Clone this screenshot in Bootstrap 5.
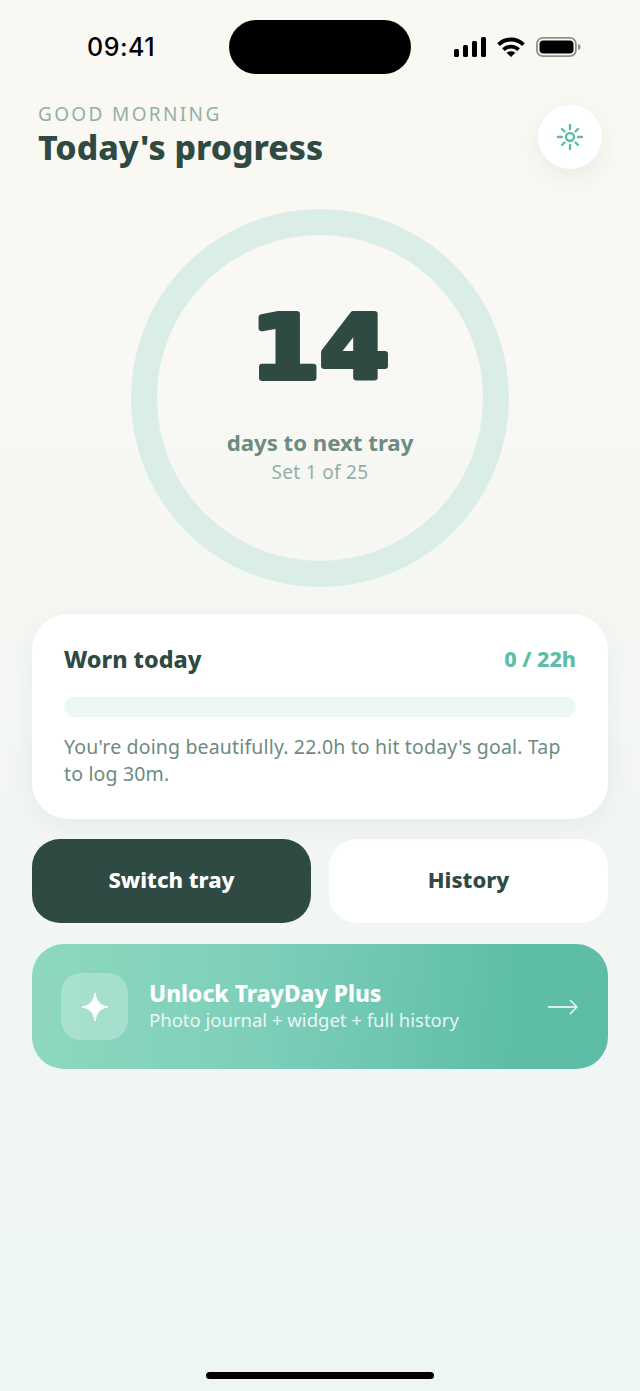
<!DOCTYPE html>
<html lang="en">
<head>
<meta charset="utf-8">
<title>TrayDay</title>
<link rel="stylesheet" href="https://cdn.jsdelivr.net/npm/bootstrap@5.3.0/dist/css/bootstrap.min.css">
<style>
html,body{height:100%}
body{font-family:"Noto Sans","Lato",sans-serif;background:linear-gradient(180deg,#faf8f3 0%,#f9f8f4 20%,#f0f6f3 75%,#eef6f3 100%);color:#2f4a43;overflow:hidden}
.screen{height:1391px;width:640px}
.status-row{height:54px;margin-top:20px;padding:0 59px 0 87px}
.clock{width:142px;font-family:"Inter","Liberation Sans",sans-serif;font-size:25px;font-weight:500;color:#000;line-height:54px;letter-spacing:.5px}
.island{width:182px;height:54px;border-radius:27px;background:#000}
.status-icons{margin-left:43px;gap:11px}
.head-row{padding:31px 38px 0;height:135px}
.eyebrow{font-size:19px;line-height:24px;letter-spacing:2.35px;color:#92b0a5;margin-top:-3px}
.page-title{font-size:33.8px;font-weight:800;line-height:42px;color:#2f4a43;margin:0}
.sun-btn{width:64px;height:64px;border-radius:50%;background:#fff;box-shadow:0 8px 24px rgba(47,74,67,.07);flex:none}
.ring{width:378px;height:378px;border:26px solid #dbede7;border-radius:50%;margin:0 auto;padding-bottom:24.5px}
.big-num{display:block;flex:none}
.big-num text{font-family:"DejaVu Sans",sans-serif;font-weight:700;font-size:88px;fill:#2f4a43;stroke:#2f4a43;stroke-width:6px;stroke-linejoin:round}
.ring-sub{font-size:22.2px;font-weight:700;line-height:28px;color:#6d8b81;margin-top:31.5px}
.ring-set{font-size:19px;line-height:24px;letter-spacing:.3px;color:#92b0a5;margin-top:3px}
.content{padding:27px 32px 0}
.worn-card{height:205px;border-radius:36px;background:#fff;border:0;padding:28px 32px;box-shadow:0 8px 28px rgba(47,74,67,.06)}
.worn-title{font-size:23.3px;font-weight:800;line-height:34px;color:#2f4a43}
.worn-val{font-size:21.5px;font-weight:800;color:#5dbda6}
.track{height:20px;border-radius:10px;background:#ecf6f2;margin-top:21px}
.worn-note{font-size:19.5px;letter-spacing:.16px;line-height:27px;color:#6d8b81;margin:16px 0 0}
.act-row{gap:18px;margin-top:20px}
.act-btn{flex:1 1 0;height:84px;border-radius:28px;border:0;font-size:22px;font-weight:800;display:flex;align-items:center;justify-content:center;padding-bottom:10px}
.act-dark,.act-dark:hover{background:#2f4a43;color:#fff}
.act-light,.act-light:hover{background:#fff;color:#2f4a43}
.promo{height:125px;border-radius:32px;margin-top:21px;padding:0 30px 0 29px;background:linear-gradient(95deg,#8ed8bf 0%,#7dcfba 40%,#5dbda6 85%);color:#fff}
.promo-icon{width:67px;height:67px;border-radius:20px;background:rgba(255,255,255,.25);flex:none}
.promo-title{font-size:22.7px;font-weight:800;line-height:28px;margin-top:-2px}
.promo-sub{font-size:18.5px;line-height:24px;color:rgba(255,255,255,.86)}
.promo-text{margin-left:21px}
.home-bar{width:228px;height:7px;border-radius:4px;background:#000;margin:0 auto}
.home-wrap{padding-top:303px}
</style>
</head>
<body>
<div class="screen d-flex flex-column">
  <div class="status-row d-flex align-items-center">
    <div class="clock">09:41</div>
    <div class="island"></div>
    <div class="status-icons d-flex align-items-center">
      <svg width="32" height="20" viewBox="0 0 32 20"><rect x="0" y="12" width="5" height="8" rx="1.5"/><rect x="9" y="8" width="5" height="12" rx="1.5"/><rect x="18" y="4" width="5" height="16" rx="1.5"/><rect x="27" y="0" width="5" height="20" rx="1.5"/></svg>
      <svg width="28" height="20" viewBox="0 0 28 20" fill="none" stroke="#000" stroke-width="3.8"><path d="M1.6 7.6C8.4 .8 19.6 .8 26.4 7.6"/><path d="M6.4 12.6C10.6 8.600 17.4 8.600 21.600 12.600"/><path d="M14 20l-4.400-4.200c2.400-2.200 6.400-2.200 8.800 0z" fill="#000" stroke="none"/></svg>
      <svg width="45" height="20" viewBox="0 0 45 20"><rect x=".9" y=".9" width="39" height="18.2" rx="6" fill="none" stroke="#8f8f8c" stroke-width="1.8"/><rect x="3.5" y="3.5" width="34" height="13" rx="4"/><path d="M42 7c1.600.4 2.600 1.500 2.600 3s-1 2.600-2.600 3z" fill="#8f8f8c"/></svg>
    </div>
  </div>
  <div class="head-row d-flex justify-content-between align-items-start">
    <div>
      <div class="eyebrow">GOOD MORNING</div>
      <h1 class="page-title">Today's progress</h1>
    </div>
    <div class="sun-btn d-flex align-items-center justify-content-center">
      <svg width="30" height="30" viewBox="0 0 30 30" fill="none" stroke="#5dbda6" stroke-width="2.4" stroke-linecap="round"><circle cx="15" cy="15" r="4"/><path d="M15 3v4M15 23v4M3 15h4M23 15h4M7 7l2.500 2.500M20.500 20.500L23 23M7 23l2.500-2.500M20.500 9.500L23 7"/></svg>
    </div>
  </div>
  <div class="ring d-flex flex-column align-items-center justify-content-center text-center">
    <svg class="big-num" width="200" height="110" viewBox="0 0 200 110"><text transform="translate(100 90) scale(1.13 1)" text-anchor="middle">14</text></svg>
    <div class="ring-sub">days to next tray</div>
    <div class="ring-set">Set 1 of 25</div>
  </div>
  <div class="content">
    <div class="card worn-card">
      <div class="d-flex justify-content-between align-items-center">
        <div class="worn-title">Worn today</div>
        <div class="worn-val">0 / 22h</div>
      </div>
      <div class="track"></div>
      <p class="worn-note">You're doing beautifully. 22.0h to hit today's goal. Tap to log 30m.</p>
    </div>
    <div class="act-row d-flex">
      <button type="button" class="btn act-btn act-dark">Switch tray</button>
      <button type="button" class="btn act-btn act-light">History</button>
    </div>
    <div class="promo d-flex align-items-center">
      <div class="promo-icon d-flex align-items-center justify-content-center">
        <svg width="28" height="30" viewBox="0 0 28 30"><path d="M14 1C15.500 9.500 19 13.500 27 15 19 16.500 15.500 20.500 14 29 12.500 20.500 9 16.500 1 15 9 13.500 12.500 9.500 14 1Z" fill="#fff" stroke="#fff" stroke-linejoin="round"/></svg>
      </div>
      <div class="promo-text flex-grow-1">
        <div class="promo-title">Unlock TrayDay Plus</div>
        <div class="promo-sub">Photo journal + widget + full history</div>
      </div>
      <svg width="30" height="16" viewBox="0 0 30 16" fill="none" stroke="#fff" stroke-width="1.300"><path d="M0 8h29M22 1l7 7-7 7"/></svg>
    </div>
  </div>
  <div class="home-wrap"><div class="home-bar"></div></div>
</div>
<script src="https://cdn.jsdelivr.net/npm/bootstrap@5.3.0/dist/js/bootstrap.bundle.min.js"></script>
</body>
</html>
